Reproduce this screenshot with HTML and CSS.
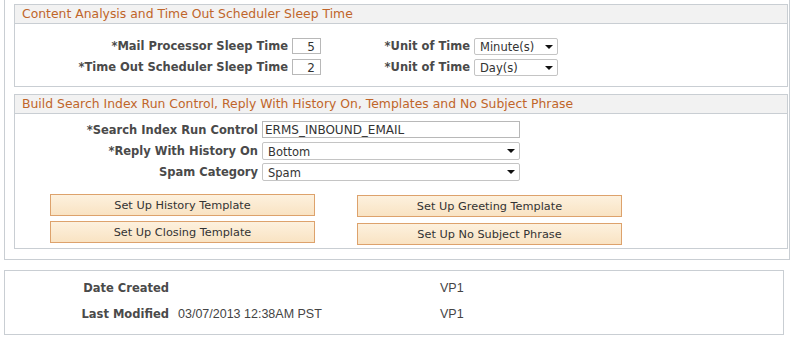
FILE: index.html
```html
<!DOCTYPE html>
<html lang="en">

<head>
  <meta charset="UTF-8">
  <title>Content Analysis Setup</title>
  <link rel="stylesheet" href="styles.css">
</head>

<body>
  <div class="outer">

    <div class="section sleep">
      <div class="section-head">Content Analysis and Time Out Scheduler Sleep Time</div>
      <div class="section-body">
        <div class="row">
          <label class="lbl lbl-sleep">*Mail Processor Sleep Time</label>
          <div class="edit num">5</div>
          <label class="lbl lbl-unit">*Unit of Time</label>
          <div class="drop unit">Minute(s)</div>
        </div>
        <div class="row">
          <label class="lbl lbl-sleep">*Time Out Scheduler Sleep Time</label>
          <div class="edit num">2</div>
          <label class="lbl lbl-unit">*Unit of Time</label>
          <div class="drop unit">Day(s)</div>
        </div>
      </div>
    </div>

    <div class="section build">
      <div class="section-head">Build Search Index Run Control, Reply With History On, Templates and No Subject Phrase</div>
      <div class="section-body">
        <div class="row tall">
          <label class="lbl lbl-build">*Search Index Run Control</label>
          <div class="edit wide">ERMS_INBOUND_EMAIL</div>
        </div>
        <div class="row tall">
          <label class="lbl lbl-build">*Reply With History On</label>
          <div class="drop wide">Bottom</div>
        </div>
        <div class="row tall">
          <label class="lbl lbl-build">Spam Category</label>
          <div class="drop wide">Spam</div>
        </div>

        <div class="buttons">
          <div class="btn-col">
            <button type="button" class="btn">Set Up History Template</button>
            <button type="button" class="btn">Set Up Closing Template</button>
          </div>
          <div class="btn-col right">
            <button type="button" class="btn">Set Up Greeting Template</button>
            <button type="button" class="btn">Set Up No Subject Phrase</button>
          </div>
        </div>
      </div>
    </div>

  </div>

  <div class="audit">
    <div class="audit-row">
      <span class="audit-lbl">Date Created</span>
      <span class="audit-val"></span>
      <span class="audit-user">VP1</span>
    </div>
    <div class="audit-row">
      <span class="audit-lbl">Last Modified</span>
      <span class="audit-val">03/07/2013 12:38AM PST</span>
      <span class="audit-user">VP1</span>
    </div>
  </div>
</body>

</html>
```

FILE: styles.css
```css
body {
  margin: 0;
  padding: 0;
  background-color: #ffffff;
  font-family: "DejaVu Sans", Verdana, sans-serif;
  font-size: 11.5px;
  color: #333333;
}

.outer {
  margin-left: 4px;
  width: 774px;
  border: 1px solid #c9ced3;
  border-top: none;
  padding: 4px 1px 10px 9px;
}

.section {
  border: 1px solid #c9ced3;
}

.section + .section {
  margin-top: 7px;
}

.section-head {
  height: 18px;
  line-height: 18px;
  padding-left: 7px;
  background-color: #f2f2f2;
  border-bottom: 1px solid #c9ced3;
  color: #c0652a;
  font-size: 12.4px;
  white-space: nowrap;
}

.sleep .section-body {
  padding: 12px 0 8px 0;
}

.build .section-body {
  padding: 5px 0 3px 0;
}

.row {
  display: flex;
  align-items: center;
  height: 20px;
  margin-bottom: 1px;
}

.row.tall {
  height: 21px;
  margin-bottom: 0;
}

.lbl {
  font-weight: bold;
  color: #4a4a4a;
  text-align: right;
  white-space: nowrap;
  padding-right: 4px;
  box-sizing: border-box;
}

.lbl-sleep {
  width: 277px;
}

.lbl-unit {
  width: 153px;
}

.lbl-build {
  width: 247px;
}

.edit {
  height: 16px;
  line-height: 16px;
  border: 1px solid #b8b8b8;
  box-sizing: border-box;
  padding: 0 2px;
  font-size: 12px;
  color: #333333;
  white-space: nowrap;
}

.edit.num {
  width: 29px;
  text-align: right;
  padding-right: 5px;
}

.edit.wide {
  width: 258px;
  height: 17px;
}

.drop {
  position: relative;
  height: 17px;
  line-height: 17px;
  border: 1px solid #c4c4c4;
  border-radius: 2px;
  box-sizing: border-box;
  padding-left: 5px;
  font-size: 11.5px;
  color: #333333;
  white-space: nowrap;
}

.drop::after {
  content: "";
  position: absolute;
  right: 4px;
  top: 6px;
  border-left: 4px solid transparent;
  border-right: 4px solid transparent;
  border-top: 4px solid #111111;
}

.drop.unit {
  width: 84px;
}

.drop.wide {
  width: 258px;
  height: 18px;
  line-height: 18px;
}

.buttons {
  display: flex;
  padding-top: 12px;
  padding-left: 35px;
  gap: 42px;
}

.btn-col {
  display: flex;
  flex-direction: column;
  gap: 5px;
}

.btn-col.right {
  margin-top: 1px;
  gap: 6px;
}

.btn {
  width: 265px;
  height: 22px;
  margin: 0;
  padding: 0;
  border: 1px solid #dda26c;
  background: linear-gradient(#fdf1de, #f9e3c3);
  font-family: "DejaVu Sans", Verdana, sans-serif;
  font-size: 11.3px;
  color: #333333;
  cursor: pointer;
}

.audit {
  margin: 10px 0 0 4px;
  width: 778px;
  border: 1px solid #c9ced3;
  padding: 6px 0 5px 0;
}

.audit-row {
  display: flex;
  align-items: center;
  height: 21px;
  margin-bottom: 5px;
}

.audit-lbl {
  width: 164px;
  text-align: right;
  font-weight: bold;
  color: #4a4a4a;
}

.audit-val {
  width: 262px;
  padding-left: 9px;
  font-family: "Liberation Sans", Arial, sans-serif;
  font-size: 12.5px;
  color: #444444;
}

.audit-user {
  font-family: "Liberation Sans", Arial, sans-serif;
  font-size: 12.5px;
  color: #444444;
}
```
